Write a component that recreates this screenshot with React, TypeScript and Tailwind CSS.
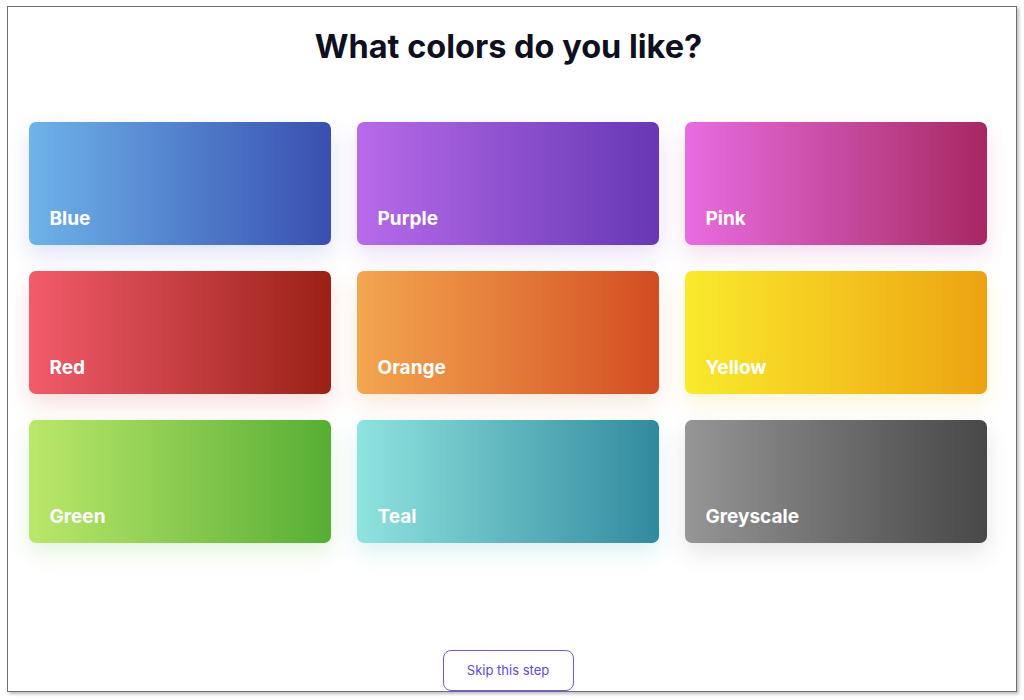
import React from "react";

interface Swatch {
  name: string;
  className: string;
}

const swatches: Swatch[] = [
  { name: "Blue", className: "bg-gradient-to-r from-[#6fb3e9] to-[#3a4fb0] shadow-[0_10px_22px_rgba(80,100,200,0.18)]" },
  { name: "Purple", className: "bg-gradient-to-r from-[#b86aea] to-[#6737b4] shadow-[0_10px_22px_rgba(140,80,210,0.18)]" },
  { name: "Pink", className: "bg-gradient-to-r from-[#e86ce2] to-[#a72763] shadow-[0_10px_22px_rgba(200,70,160,0.18)]" },
  { name: "Red", className: "bg-gradient-to-r from-[#f25b6b] to-[#9b2014] shadow-[0_10px_22px_rgba(220,70,70,0.18)]" },
  { name: "Orange", className: "bg-gradient-to-r from-[#f3a650] to-[#d24c22] shadow-[0_10px_22px_rgba(230,130,60,0.18)]" },
  { name: "Yellow", className: "bg-gradient-to-r from-[#f9ea2c] to-[#eca311] shadow-[0_10px_22px_rgba(240,200,40,0.18)]" },
  { name: "Green", className: "bg-gradient-to-r from-[#bae86b] to-[#55ae33] shadow-[0_10px_22px_rgba(110,190,70,0.18)]" },
  { name: "Teal", className: "bg-gradient-to-r from-[#8fe4df] to-[#308a9e] shadow-[0_10px_22px_rgba(80,180,190,0.18)]" },
  { name: "Greyscale", className: "bg-gradient-to-r from-[#969696] to-[#484848] shadow-[0_10px_22px_rgba(100,100,100,0.16)]" },
];

function SwatchCard({ swatch }: { swatch: Swatch }) {
  return (
    <button
      className={`flex h-[123px] items-end rounded-[7px] px-[21px] pb-[17px] text-left ${swatch.className}`}
    >
      <span className="text-[19px] font-bold leading-none text-white">{swatch.name}</span>
    </button>
  );
}

export default function App() {
  return (
    <div
      className="h-[700px] w-[1024px] bg-white pl-[7px] pt-[6px]"
      style={{ fontFamily: "Inter, 'Liberation Sans', sans-serif" }}
    >
      <div className="flex h-[686px] w-[1010px] flex-col border-[1.5px] border-[#6f6f6f] bg-white shadow-[2px_2px_3px_rgba(0,0,0,0.25)]">
        <h1 className="pr-[7px] pt-[22px] text-center text-[32.5px] font-bold leading-[36px] text-[#0e0f1f]">
          What colors do you like?
        </h1>

        <div className="ml-[20.5px] mt-[57px] grid w-[958px] grid-cols-3 gap-[26px]">
          {swatches.map((s) => (
            <SwatchCard key={s.name} swatch={s} />
          ))}
        </div>

        <div className="mt-auto flex justify-center pr-[8px]">
          <button className="h-[41px] w-[131px] rounded-[8px] border border-[#6c5cf5] bg-white text-[13px] text-[#5a4ae8]">
            Skip this step
          </button>
        </div>
      </div>
    </div>
  );
}
